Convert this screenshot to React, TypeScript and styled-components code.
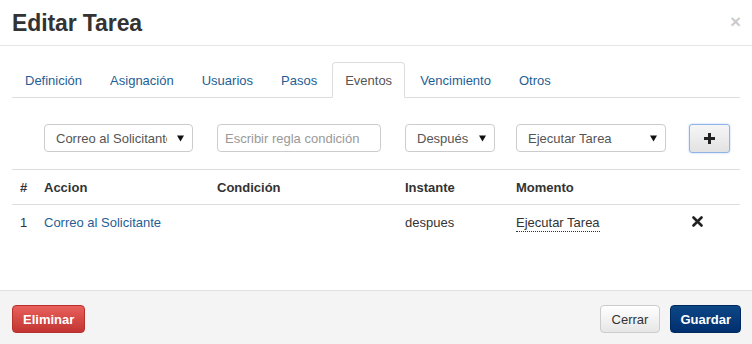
import styled, { createGlobalStyle } from "styled-components";

const GlobalStyle = createGlobalStyle`
  html, body {
    margin: 0;
    padding: 0;
    background: #fff;
  }
  body {
    font-family: "Liberation Sans", Arial, sans-serif;
    font-size: 13px;
    color: #333;
  }
`;

const COLS = "24px 173px 188px 111px 173px 59px";

const Modal = styled.div`
  width: 752px;
  height: 344px;
  display: flex;
  flex-direction: column;
  background: #fff;
`;

const Header = styled.div`
  height: 45px;
  padding: 0 12px;
  border-bottom: 1px solid #e5e5e5;
  display: flex;
  align-items: center;
  justify-content: space-between;
`;

const Title = styled.h4`
  margin: 0;
  font-size: 23px;
  font-weight: bold;
  color: #333;
  letter-spacing: -0.1px;
  padding-top: 1px;
`;

const Close = styled.span`
  font-size: 19px;
  font-weight: bold;
  color: #000;
  opacity: 0.2;
  line-height: 1;
  margin-right: -1px;
  margin-top: -2px;
`;

const Body = styled.div`
  height: 244px;
  box-sizing: border-box;
  padding: 16px 12px 0;
`;

const Tabs = styled.ul`
  list-style: none;
  margin: 0;
  padding: 0;
  display: flex;
  border-bottom: 1px solid #ddd;
`;

const Tab = styled.li<{ $active?: boolean }>`
  height: 36px;
  box-sizing: border-box;
  padding: 1px 12px 0;
  margin-right: 2px;
  margin-bottom: -1px;
  display: flex;
  align-items: center;
  font-size: 13px;
  border: 1px solid transparent;
  border-radius: 4px 4px 0 0;
  color: #1f5e94;
  ${(p) =>
    p.$active &&
    `
    border-color: #ddd #ddd #fff;
    background: #fff;
    color: #555;
  `}
`;

const FormRow = styled.div`
  display: grid;
  grid-template-columns: ${COLS};
  margin-top: 26px;
  height: 28px;
`;

const Cell = styled.div`
  padding-left: 8px;
`;

const SelectBox = styled.div<{ $width: number }>`
  width: ${(p) => p.$width}px;
  height: 28px;
  box-sizing: border-box;
  border: 1px solid #ccc;
  border-radius: 4px;
  display: flex;
  align-items: center;
  padding: 0 8px 0 11px;
  color: #555;
  font-size: 13px;
  background: #fff;
`;

const SelectText = styled.span`
  flex: 1;
  overflow: hidden;
  white-space: nowrap;
`;

const Arrow = styled.svg`
  flex: none;
  margin-left: 10px;
`;

const TextInput = styled.input`
  width: 164px;
  height: 28px;
  box-sizing: border-box;
  border: 1px solid #ccc;
  border-radius: 4px;
  padding: 0 7px;
  font-family: "Liberation Sans", Arial, sans-serif;
  font-size: 13px;
  color: #555;
  outline: none;
  &::placeholder {
    color: #999;
  }
`;

const AddButton = styled.button`
  width: 41px;
  height: 29px;
  box-sizing: border-box;
  border: 1px solid #8fb3e6;
  border-radius: 3px;
  background: linear-gradient(#f6f6f6, #e2e2e2);
  box-shadow: 0 0 2px rgba(102, 160, 233, 0.6);
  display: flex;
  align-items: center;
  justify-content: center;
  padding: 0;
`;

const Table = styled.div`
  margin-top: 17px;
  border-top: 1px solid #ddd;
`;

const Row = styled.div<{ $head?: boolean }>`
  display: grid;
  grid-template-columns: ${COLS};
  height: 34px;
  align-items: center;
  border-bottom: ${(p) => (p.$head ? "1px solid #ddd" : "none")};
  font-weight: ${(p) => (p.$head ? "bold" : "normal")};
  color: #333;
`;

const Td = styled.div<{ $pad?: number }>`
  padding-left: ${(p) => p.$pad ?? 8}px;
  white-space: nowrap;
`;

const LinkText = styled.span`
  color: #1f5e94;
`;

const Editable = styled.span`
  border-bottom: 1px dotted #333;
  padding-bottom: 1px;
`;

const Footer = styled.div`
  flex: 1;
  background: #f4f4f4;
  border-top: 1px solid #e1e1e1;
  padding: 14px 11px 0 12px;
  display: flex;
  align-items: flex-start;
`;

const Spacer = styled.div`
  flex: 1;
`;

type Variant = "danger" | "default" | "primary";

const padFor = (v: Variant) => (v === "default" ? 11 : v === "primary" ? 9 : 10);

const Btn = styled.button<{ $variant: Variant }>`
  height: 28px;
  box-sizing: border-box;
  border-radius: 4px;
  font-family: "Liberation Sans", Arial, sans-serif;
  font-size: 13px;
  padding: 0 ${(p) => padFor(p.$variant)}px;
  font-weight: ${(p) => (p.$variant === "default" ? "normal" : "bold")};
  color: ${(p) => (p.$variant === "default" ? "#333" : "#fff")};
  border: 1px solid
    ${(p) =>
      p.$variant === "danger" ? "#b8312e" : p.$variant === "primary" ? "#002a5e" : "#ccc"};
  background: ${(p) =>
    p.$variant === "danger"
      ? "linear-gradient(#e8605c, #c23431)"
      : p.$variant === "primary"
      ? "linear-gradient(#0e4786, #002f6e)"
      : "linear-gradient(#fff, #e6e6e6)"};
  & + & {
    margin-left: 10px;
  }
`;

function Select({ width, label }: { width: number; label: string }) {
  return (
    <SelectBox $width={width}>
      <SelectText>{label}</SelectText>
      <Arrow width="7" height="7" viewBox="0 0 7 7">
        <path d="M0 0.5h7L3.5 6.5z" fill="#111" />
      </Arrow>
    </SelectBox>
  );
}

const tabs = ["Definición", "Asignación", "Usuarios", "Pasos", "Eventos", "Vencimiento", "Otros"];

export default function App() {
  return (
    <>
      <GlobalStyle />
      <Modal>
        <Header>
          <Title>Editar Tarea</Title>
          <Close>×</Close>
        </Header>
        <Body>
          <Tabs>
            {tabs.map((t) => (
              <Tab key={t} $active={t === "Eventos"}>
                {t}
              </Tab>
            ))}
          </Tabs>
          <FormRow>
            <div />
            <Cell>
              <Select width={149} label="Correo al Solicitante" />
            </Cell>
            <Cell>
              <TextInput placeholder="Escribir regla condición" />
            </Cell>
            <Cell>
              <Select width={90} label="Después" />
            </Cell>
            <Cell>
              <Select width={150} label="Ejecutar Tarea" />
            </Cell>
            <Cell>
              <AddButton>
                <svg width="11" height="11" viewBox="0 0 11 11">
                  <path d="M4 0h3v4h4v3H7v4H4V7H0V4h4z" fill="#222" />
                </svg>
              </AddButton>
            </Cell>
          </FormRow>
          <Table>
            <Row $head>
              <Td>#</Td>
              <Td>Accion</Td>
              <Td>Condición</Td>
              <Td>Instante</Td>
              <Td>Momento</Td>
              <Td />
            </Row>
            <Row>
              <Td>1</Td>
              <Td>
                <LinkText>Correo al Solicitante</LinkText>
              </Td>
              <Td />
              <Td>despues</Td>
              <Td>
                <Editable>Ejecutar Tarea</Editable>
              </Td>
              <Td $pad={11}>
                <svg width="11" height="11" viewBox="0 0 11 11">
                  <path
                    d="M1.5 1.5L9.5 9.5M9.5 1.5L1.5 9.5"
                    stroke="#222"
                    strokeWidth="2.6"
                    strokeLinecap="round"
                  />
                </svg>
              </Td>
            </Row>
          </Table>
        </Body>
        <Footer>
          <Btn $variant="danger">Eliminar</Btn>
          <Spacer />
          <Btn $variant="default">Cerrar</Btn>
          <Btn $variant="primary">Guardar</Btn>
        </Footer>
      </Modal>
    </>
  );
}
